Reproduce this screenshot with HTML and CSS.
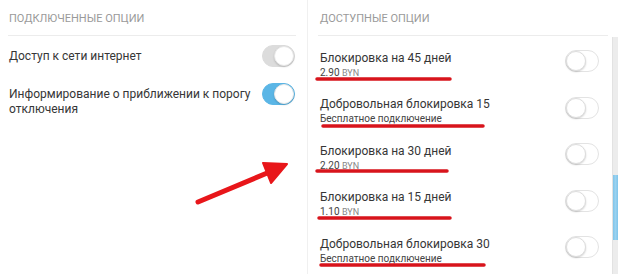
FILE: index.html
```html
<!DOCTYPE html>
<html lang="ru">
<head>
    <meta charset="UTF-8">
    <meta name="viewport" content="width=device-width, initial-scale=1.0">
    <title>Опции</title>
    <link rel="stylesheet" href="styles.css">
</head>
<body>
<div class="page">
    <section class="panel panel-left">
        <div class="panel-title">Подключенные опции</div>
        <div class="opts">
            <div class="opt">
                <div class="opt-name">Доступ к сети интернет</div>
                <span class="toggle toggle-lock"></span>
            </div>
            <div class="opt">
                <div class="opt-name">Информирование о приближении к порогу отключения</div>
                <span class="toggle toggle-on"></span>
            </div>
        </div>
    </section>

    <section class="panel panel-right">
        <div class="panel-title">Доступные опции</div>
        <div class="scroll-box">
            <div class="list">
                <div class="item">
                    <div class="item-text">
                        <div class="item-name">Блокировка на 45 дней</div>
                        <div class="item-price">2.90 <span class="cur">BYN</span></div>
                    </div>
                    <span class="toggle"></span>
                </div>
                <div class="item">
                    <div class="item-text">
                        <div class="item-name">Добровольная блокировка 15</div>
                        <div class="item-price">Бесплатное подключение</div>
                    </div>
                    <span class="toggle"></span>
                </div>
                <div class="item">
                    <div class="item-text">
                        <div class="item-name">Блокировка на 30 дней</div>
                        <div class="item-price">2.20 <span class="cur">BYN</span></div>
                    </div>
                    <span class="toggle"></span>
                </div>
                <div class="item">
                    <div class="item-text">
                        <div class="item-name">Блокировка на 15 дней</div>
                        <div class="item-price">1.10 <span class="cur">BYN</span></div>
                    </div>
                    <span class="toggle"></span>
                </div>
                <div class="item">
                    <div class="item-text">
                        <div class="item-name">Добровольная блокировка 30</div>
                        <div class="item-price">Бесплатное подключение</div>
                    </div>
                    <span class="toggle"></span>
                </div>
            </div>
            <div class="scrollbar"><div class="thumb"></div></div>
        </div>
    </section>
</div>

<!-- пометки поверх скриншота -->
<svg class="marks" width="628" height="274" viewBox="0 0 628 274">
    <g stroke="#d8141c" stroke-width="3.5" stroke-linecap="round">
        <line x1="317" y1="79" x2="450" y2="79"/>
        <line x1="323" y1="126" x2="483" y2="126"/>
        <line x1="317" y1="171" x2="447" y2="171"/>
        <line x1="319" y1="218" x2="450" y2="218"/>
        <line x1="321" y1="265" x2="484" y2="265"/>
    </g>
    <line x1="198" y1="202" x2="272" y2="171" stroke="#e8161a" stroke-width="5" stroke-linecap="round"/>
    <polygon points="263,163 287,164 271,183" fill="#e8161a" stroke="#e8161a" stroke-width="2" stroke-linejoin="round"/>
</svg>
</body>
</html>
```

FILE: styles.css
```css
body {
    margin: 0;
    padding: 0;
    overflow: hidden;
    font-family: Roboto, 'Liberation Sans', sans-serif;
    background: #fff;
    color: #363636;
}

.page {
    display: flex;
    height: 274px;
}

.panel-left {
    width: 288px;
    flex: none;
    padding: 0 11px 0 8px;
}

.panel-right {
    flex: 1;
    border-left: 1px solid #f0f0f0;
    padding: 0 10px 0 10px;
}

.panel-title {
    font-size: 11px;
    line-height: 13px;
    text-transform: uppercase;
    color: #9a9a9a;
    padding: 12px 0 10px 1px;
    border-bottom: 1px solid #ececec;
}

.panel-right .panel-title {
    padding-left: 2px;
    margin-right: 10px;
}

/* подключенные */
.opts {
    padding: 9px 1px 0 1px;
}

.opt {
    display: flex;
    justify-content: space-between;
    align-items: flex-start;
    margin-bottom: 16px;
}

.opt-name {
    font-size: 12px;
    line-height: 15.5px;
    padding-top: 3.5px;
    width: 245px;
}

/* переключатели */
.toggle {
    position: relative;
    flex: none;
    width: 33px;
    height: 22px;
    box-sizing: border-box;
    border-radius: 11px;
    background: #fff;
    border: 1px solid #e3e3e3;
}

.toggle::after {
    content: '';
    position: absolute;
    top: 0;
    left: 0;
    width: 20px;
    height: 20px;
    box-sizing: border-box;
    border-radius: 50%;
    background: #fff;
    border: 1px solid #ddd;
    box-shadow: 0 1px 2px rgba(0, 0, 0, 0.18);
}

.toggle-lock {
    background: #dcdcdc;
    border-color: #dcdcdc;
}

.toggle-on {
    background: #5bb6e6;
    border-color: #5bb6e6;
}

.toggle-lock::after,
.toggle-on::after {
    left: auto;
    right: 0;
    border-color: #e8e8e8;
}

/* доступные */
.scroll-box {
    display: flex;
    gap: 4px;
    margin-top: 1px;
}

.list {
    flex: 1;
    padding-top: 4px;
}

.item {
    display: flex;
    justify-content: space-between;
    align-items: flex-start;
    height: 46.5px;
    padding: 0 9px 0 2px;
}

.item-text {
    padding-top: 8.5px;
}

.item-name {
    font-size: 12px;
    line-height: 16px;
}

.item-price {
    font-size: 10px;
    line-height: 14px;
    color: #444;
}

.cur {
    font-size: 9px;
    color: #888;
}

.item .toggle {
    width: 34px;
    margin-top: 9px;
}

.scrollbar {
    width: 6px;
    height: 240px;
    background: #ececec;
    border-left: 1px solid #e2e2e2;
    box-sizing: border-box;
}

.thumb {
    margin-top: 138px;
    height: 65px;
    background: linear-gradient(to right, #7fc4ea, #9ad2f0, #7fc4ea);
}

.marks {
    position: absolute;
    top: 0;
    left: 0;
    pointer-events: none;
}
```
